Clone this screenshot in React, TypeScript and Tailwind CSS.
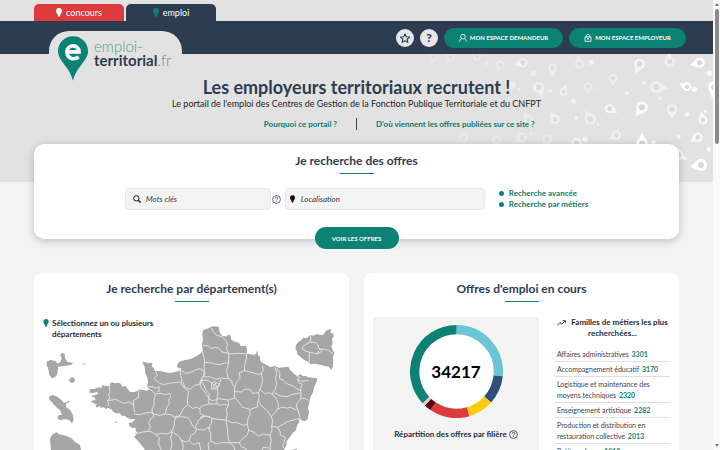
import React from "react";

const PIN_PATH = "M0 -12a12 12 0 0 1 12 12c0 6-7 11-12 23c-5-12-12-17-12-23a12 12 0 0 1 12-12z";

// x, y of the head, direction of the point (degrees clockwise from down), scale, opacity
const pins: [number, number, number, number, number][] = [
  [68, 38, 75, 1.2, 0.5], [157, 55, 0, 1.1, 0.4], [238, 42, 170, 1.2, 0.4], [418, 42, 25, 1.4, 0.7],
  [508, 35, 175, 1.3, 0.5], [598, 38, 75, 1.3, 1], [338, 85, 0, 1.1, 0.4], [115, 112, -20, 1.4, 0.5],
  [190, 125, 195, 1.0, 0.5], [263, 110, -5, 1.1, 0.4], [468, 112, -85, 1.5, 0.5], [560, 110, 110, 1.1, 1],
  [640, 112, 10, 1.4, 1], [328, 176, -60, 1.2, 0.7], [425, 172, 35, 1.5, 0.8], [515, 178, 0, 1.3, 0.6],
  [270, 208, 150, 1.4, 0.4], [165, 208, 140, 1.2, 0.5], [608, 210, 165, 1.1, 0.8], [85, 210, 150, 1.2, 0.25],
  [65, 262, 60, 1.2, 0.3], [348, 255, 60, 1.2, 0.5], [425, 280, 180, 1.4, 1], [592, 262, 60, 1.2, 0.8],
  [602, 345, 80, 1.5, 1], [535, 315, 160, 1.3, 0.7], [228, 280, 20, 1.4, 0.6], [140, 268, 30, 1.3, 0.25],
  [0, 45, 20, 1.1, 0.3], [-70, 18, 160, 1.1, 0.25], [-150, 20, 40, 1.1, 0.25], [-10, 270, 30, 1.1, 0.25],
  [-110, 262, 60, 1.1, 0.25], [-200, 20, 20, 1.1, 0.2],
];

const dots: [number, number, number, number][] = [
  [273, 37, 8, 0.5], [100, 70, 8, 0.4], [627, 70, 8, 0.8], [35, 105, 13, 0.4], [55, 118, 6, 0.3],
  [150, 122, 6, 0.4], [220, 152, 8, 0.5], [380, 130, 6, 0.5], [430, 100, 6, 0.5], [583, 118, 8, 0.8],
  [478, 145, 6, 0.5], [228, 203, 6, 0.5], [560, 193, 7, 0.7], [255, 268, 8, 0.7], [535, 260, 6, 0.6],
  [460, 277, 7, 0.7], [625, 298, 7, 0.8], [553, 325, 6, 0.7], [293, 222, 5, 0.4], [615, 185, 5, 0.7],
  [290, 115, 4, 0.3], [92, 250, 5, 0.3], [-40, 40, 7, 0.25],
];

const islands = [
  "M50 290L62 285L76 288L82 295L84 310L82 326L76 336L66 340L58 330L55 312L50 300Z",
  "M90 270L97 263L104 267L105 280L112 290L130 294L124 299L108 302L95 304L82 306L80 298L92 290L95 280Z",
  "M118 343L126 336L134 341L134 350L126 354L118 350Z",
  "M57 396L66 390L80 394L92 403L102 414L112 410L118 406L119 411L108 416L108 426L120 434L128 448L131 466L125 475L118 465L104 462L90 466L82 460L86 450L96 450L90 436L76 424L66 412L58 404Z",
  "M60 520L68 508L80 502L88 508L108 512L124 520L136 532L150 540L154 560L150 620L130 660L90 660L66 600Z",
  "M155 300L168 293L162 299Z",
  "M252 472L260 470L262 475Z",
  "M786 555L800 551L802 562L780 565Z",
];

const mainland =
  "M519 196L531 191L548 184L567 185L568 197L571 206L579 214L590 214L597 208L602 214L603 223L614 230L628 234L632 243L648 243L651 254L650 266L662 268L673 270L679 265L682 256L684 270L690 276L691 288L702 296L715 302L720 306L735 303L746 308L762 307L775 305L780 315L788 322L796 330L802 333L812 328L818 333L830 334L834 337L848 338L862 340L860 350L855 360L851 372L848 385L842 394L840 402L838 414L834 428L837 442L835 453L832 464L825 468L818 467L812 463L806 463L808 472L803 478L800 486L798 496L788 504L782 514L775 522L769 532L770 540L765 548L763 560L770 680L360 680L345 560L342 550L330 535L322 526L312 517L318 509L315 503L324 505L318 498L316 488L306 489L298 482L296 475L308 471L316 462L303 463L292 458L284 452L275 452L270 445L258 445L250 440L243 432L232 428L228 433L222 427L212 428L208 423L200 428L196 421L203 419L193 416L182 408L196 405L195 398L182 392L196 390L204 387L202 380L190 384L178 383L181 372L192 372L205 367L215 369L215 361L230 363L238 363L241 355L246 352L256 355L266 353L272 356L278 365L286 362L291 369L300 380L308 382L320 379L328 373L338 375L352 377L358 371L350 365L354 352L352 338L346 325L344 306L337 292L347 291L352 295L367 293L365 305L371 308L374 318L390 318L406 322L422 324L438 320L450 316L455 309L446 310L441 305L443 296L448 290L465 285L482 282L500 273L512 265L519 257L517 248L516 238L519 225L517 208Z";

// Department limits of the eastern half of the map
const bordersEast = [
  "M8 76L24 78L34 86L45 82L56 84L66 96L78 98L90 102L115 100L141 101",
  "M34 24L42 38L50 46L66 50L78 62L82 72L80 88L87 102",
  "M8 96L12 112L14 126L12 140L13 154L10 172",
  "M14 128L30 128L44 132L60 134L74 128L86 130",
  "M86 100L86 130L80 150L82 165L86 178L95 182L97 194L105 200L103 215",
  "M10 170L26 170L34 172L48 178L62 174L84 176",
  "M141 101L137 125L133 140L134 152L118 158L120 175L110 186L105 200",
  "M134 152L148 156L160 158L172 162L185 162",
  "M187 138L190 150L184 160L188 178L185 194L180 208L175 218L178 232L172 250L174 260L162 264L150 268",
  "M225 142L230 160L226 176L230 190L226 208L216 222L205 218L196 222L180 208",
  "M230 145L240 160L238 175L252 182L262 192L280 198L290 206L303 213",
  "M290 168L300 172L292 178L305 184L322 181L326 184M292 178L296 188L307 192L302 205L303 218L302 236L290 252L290 262L294 270L298 285L302 292",
  "M222 218L240 228L262 230L275 224L300 219M302 236L314 235L326 241",
  "M103 215L124 216L134 208L150 208L158 220L176 218",
  "M216 222L230 238L236 256L232 268L245 262L260 264L272 262L290 270",
  "M174 240L185 258L200 270L214 290L232 268",
  "M103 215L104 232L115 245L128 262L150 268L150 282L144 296L142 312L146 330",
  "M105 234L84 240L86 256L78 270L82 282L78 300L96 308L112 308L130 316L142 312M78 300L82 326L84 350L88 368L118 368L128 356L142 345L146 330L160 336L176 348L190 342L210 346L216 330L215 318L218 304L214 290",
  "M215 318L232 322L250 312L264 304L280 300L300 294",
  "M232 322L240 334L242 346L256 352L252 366L248 378L256 392",
  "M210 346L214 362L210 380L212 400M118 368L124 380L138 386L140 400M186 392L190 382L208 384",
  "M0 262L10 256L26 252L52 252L62 256L72 252L84 256M24 240L28 252M50 240L52 252M26 238L40 242L56 236L84 240",
  "M0 292L20 288L36 295L52 298L78 300M36 295L34 310L26 324L32 340L32 362L24 372L28 400M32 362L48 372L64 368L88 368M88 368L102 380L106 400",
  "M2 182L12 195L18 212L28 222L26 238M2 182L20 180L36 190M62 178L58 192L52 204L54 220L50 238M32 206L52 208M36 190L44 184L52 190L58 194L52 202L42 204L34 200L36 190L54 202M40 200L50 186",
];

// Department limits of the western half of the map
const bordersWest = [
  "M90 188L88 202L90 214L86 226L90 236L82 242L86 250L84 258",
  "M82 242L98 240L108 238L118 244L132 250L146 246L158 252L162 262L164 278",
  "M178 204L176 220L174 234L160 242L162 256M206 206L218 214L226 224L222 240L222 256L216 268L217 278L200 278L180 284L162 282",
  "M226 222L240 220L256 224L270 220L272 230L266 240L268 252L260 262L256 282L240 286L222 282L217 278",
  "M201 200L216 200L228 204L238 200L236 216",
  "M226 154L232 166L222 176L236 188L250 194L268 190L284 188L298 186L306 192",
  "M300 150L302 166L306 180L304 192L314 206L326 214L324 226L322 240L323 254L310 266L300 286L286 292L272 284L256 282",
  "M292 148L304 152L318 160L334 156L346 150L360 146L370 152M310 188L314 202L330 208L344 196L360 192L368 178",
  "M370 152L376 160L364 178L360 186L364 204L376 218L384 230L388 240M323 254L338 266L348 262L360 266L360 280L374 288L390 290",
  "M217 278L222 290L212 296L206 310L212 320L204 334L188 336L166 342",
  "M204 334L216 336L228 344L244 340L262 342L276 334L282 318L286 292M228 344L238 354L236 372L244 392",
  "M286 292L302 290L322 292L332 304L338 318L350 328L344 340L332 346L328 362L316 366L304 360L296 348L276 336",
  "M276 336L272 354L276 370L272 392M304 360L310 378L308 392M350 328L372 330L384 322L390 326M350 328L346 320L356 300L374 288M328 362L340 374L358 368L362 392",
];

const inset =
  "M840 210L850 212L860 207L872 210L880 209L886 200L892 194L903 192L901 203L910 206L911 214L906 222L908 234L904 244L908 256L914 264L909 276L910 290L909 304L903 315L897 305L885 303L872 300L856 296L840 297L832 289L822 284L812 276L802 268L800 258L796 250L798 240L806 230L814 226L820 218L832 219Z";
const insetBorders =
  "M840 210L843 222L838 232L820 243L816 252L828 259L844 263L862 266L874 260L876 254L866 250L864 240L856 232L838 232M866 254L884 252L898 258L910 268M838 262L838 296M862 266L866 258";

function Pin({ className }: { className: string }) {
  return (
    <svg viewBox="0 0 16 24" className={className} fill="currentColor" aria-hidden="true">
      <path d="M8 0a8 8 0 0 1 8 8c0 4-3 7-5 10H5C3 15 0 12 0 8a8 8 0 0 1 8-8zM5 18h6v3.500H9.500v2.500h-3v-2.500H5z" />
    </svg>
  );
}

function Help({ className }: { className: string }) {
  return (
    <svg viewBox="0 0 24 24" className={className} fill="none" stroke="currentColor" strokeWidth="2" aria-hidden="true">
      <circle cx="12" cy="12" r="10.500" />
      <path d="M8.500 9.500c0-5 7-4.500 7-.5c0 2.500-3.500 2.500-3.500 5.500M12 16.500v2.300" />
    </svg>
  );
}

function Title({ children }: { children: React.ReactNode }) {
  return (
    <h2 className="flex flex-col items-center text-[12px] leading-[16px] font-bold text-[#2d3c50]">
      {children}
      <span className="mt-[4px] h-px w-[34px] bg-[#0b8274]" />
    </h2>
  );
}

function Header() {
  return (
    <header>
      <div className="flex items-end gap-[2px] bg-[#e2e2e2] px-[34px] pt-[4px] text-[9px] leading-[17px] text-white">
        <a href="#concours" className="flex w-[90px] items-center justify-center gap-[4px] rounded-t-[5px] bg-[#dc3a3c]">
          <Pin className="h-[9px] w-[6px]" />
          concours
        </a>
        <a href="#emploi" className="flex w-[90px] items-center justify-center gap-[4px] rounded-t-[5px] bg-[#2d3c50]">
          <Pin className="h-[9px] w-[6px] text-[#0b8274]" />
          emploi
        </a>
      </div>
      <nav className="flex h-[33px] items-center bg-[#2d3c50] pr-[27px] pl-[49px]">
        <a href="#accueil" className="relative z-10 mt-[10px] flex h-[52px] w-[133px] items-start self-start rounded-t-[20px] bg-[#e2e2e2] pt-[5px] pl-[9px]">
          <svg viewBox="0 0 90 134" className="h-[45px] w-[30px] shrink-0" aria-hidden="true">
            <path d="M45 0a45 45 0 0 1 45 45c0 28-36 48-45 89C36 93 0 73 0 45A45 45 0 0 1 45 0z" fill="#0b8274" />
            <path d="M27 47h36c0-24-36-24-36 0c0 24 24 24 35 15" fill="none" stroke="#fff" strokeWidth="11" />
          </svg>
          <span className="mt-[3px] ml-[6px] text-[15px] leading-[14px] text-[#2d3c50]">
            <span className="block font-light text-[#4d9c91]">emploi-</span>
            <span className="font-bold">territorial</span>
            <span className="font-light text-[#7b8490]">.fr</span>
          </span>
        </a>
        <div className="ml-auto flex items-center gap-[6px]">
          <button aria-label="Favoris" className="flex size-[18px] items-center justify-center rounded-full bg-[#e6e6e8] text-[#2d3c50]">
            <svg viewBox="0 0 24 24" className="size-[10px]" fill="none" stroke="currentColor" strokeWidth="2.500" strokeLinejoin="round" aria-hidden="true">
              <path d="M12 2l3 7 8 .8-6 5.200 2 7.500-7-4-7 4 2-7.500-6-5.200L9 9z" />
            </svg>
          </button>
          <button aria-label="Aide" className="flex size-[18px] items-center justify-center rounded-full bg-[#e6e6e8] text-[12px] leading-[18px] font-black text-[#2d3c50]">
            ?
          </button>
          <button className="flex h-[20px] w-[119px] items-center justify-center gap-[3px] rounded-full bg-[#0b8274] text-[6px] font-bold text-white">
            <svg viewBox="0 0 24 24" className="size-[8px]" fill="none" stroke="currentColor" strokeWidth="2.500" aria-hidden="true">
              <circle cx="12" cy="8" r="7" />
              <path d="M8 14c-4 1-6 4-6 9M16 14c4 1 6 4 6 9" />
            </svg>
            MON ESPACE DEMANDEUR
          </button>
          <button className="flex h-[20px] w-[117px] items-center justify-center gap-[3px] rounded-full bg-[#0b8274] text-[6px] font-bold text-white">
            <svg viewBox="0 0 24 24" className="size-[8px]" fill="none" stroke="currentColor" strokeWidth="2.500" aria-hidden="true">
              <path d="M3 9h18v13H3zM7 9V6c0-6 10-6 10 0v3M12 14v4M9 14h6" />
            </svg>
            MON ESPACE EMPLOYEUR
          </button>
        </div>
      </nav>
    </header>
  );
}

function Hero() {
  return (
    <section className="relative overflow-hidden bg-[#e2e2e2] pt-[22px] pb-[52px] text-center">
      <svg viewBox="-262 12 900 384" className="absolute top-0 right-0 h-[128px] w-[300px]" fill="#fff" aria-hidden="true">
        {pins.map(([x, y, a, s, o], i) => (
          <g key={i} transform={`translate(${x} ${y}) rotate(${a}) scale(${s})`} opacity={o}>
            <path d={PIN_PATH} />
            <circle r="6" fill="#d8d8d8" />
          </g>
        ))}
        {dots.map(([x, y, r, o], i) => (
          <circle key={i} cx={x} cy={y} r={r} opacity={o} />
        ))}
      </svg>
      <div className="relative">
        <h1 className="text-[18px] leading-[22px] font-bold text-[#2d3c50]">Les employeurs territoriaux recrutent !</h1>
        <p className="text-[9px] leading-[12px] text-[#222]">
          Le portail de l'emploi des Centres de Gestion de la Fonction Publique Territoriale et du CNFPT
        </p>
        <div className="mt-[8px] flex items-center text-[8px] leading-[12px] font-bold text-[#0b7a6d]">
          <div className="flex-1 pr-[19px] text-right">
            <a href="#portail">Pourquoi ce portail ?</a>
          </div>
          <span className="h-[12px] w-px bg-[#444]" />
          <div className="flex-1 pl-[19px] text-left">
            <a href="#offres">D'où viennent les offres publiées sur ce site ?</a>
          </div>
        </div>
      </div>
    </section>
  );
}

function Search() {
  return (
    <form className="relative z-10 mx-[34px] -mt-[38px] flex flex-col rounded-[10px] bg-white pt-[9px] shadow-[0_2px_8px_rgba(0,0,0,0.22)]">
      <Title>Je recherche des offres</Title>
      <div className="mt-[14px] flex items-center justify-center text-[8px]">
        <label className="flex h-[22px] w-[146px] items-center gap-[5px] rounded-[4px] border border-[#e8e8e8] bg-[#f3f3f3] px-[7px]">
          <svg viewBox="0 0 24 24" className="size-[8px] shrink-0" fill="none" stroke="#111" strokeWidth="3" aria-hidden="true">
            <circle cx="10" cy="10" r="8" />
            <path d="M16 16l7 7" strokeWidth="4" />
          </svg>
          <input aria-label="Mots clés" placeholder="Mots clés" className="w-full min-w-0 bg-transparent italic outline-none placeholder:text-[#2d3c50]" />
        </label>
        <Help className="mx-[1px] size-[9px] text-[#2d3c50]" />
        <label className="ml-[3px] flex h-[22px] w-[200px] items-center gap-[6px] rounded-[4px] border border-[#e8e8e8] bg-[#f3f3f3] px-[4px]">
          <Pin className="h-[8px] w-[5px] shrink-0 text-[#111]" />
          <input aria-label="Localisation" placeholder="Localisation" className="w-full min-w-0 bg-transparent italic outline-none placeholder:text-[#2d3c50]" />
        </label>
        <ul className="ml-[14px] text-[8px] leading-[11px] font-bold whitespace-nowrap text-[#0b7a6d]">
          <li className="flex items-center gap-[5px]">
            <span className="size-[5px] shrink-0 rounded-full bg-[#0b8274]" />
            <a href="#avancee">Recherche avancée</a>
          </li>
          <li className="flex items-center gap-[5px]">
            <span className="size-[5px] shrink-0 rounded-full bg-[#0b8274]" />
            <a href="#metiers">Recherche par métiers</a>
          </li>
        </ul>
      </div>
      <button type="button" className="mt-[17px] -mb-[10px] h-[22px] w-[84px] self-center rounded-full bg-[#0b8274] text-[6px] font-bold text-white">
        VOIR LES OFFRES
      </button>
    </form>
  );
}

function Departments() {
  return (
    <section className="rounded-[8px] bg-white pt-[8px]">
      <Title>Je recherche par département(s)</Title>
      <div className="mt-[13px] grid">
        <svg viewBox="12 150 945 540" className="col-start-1 row-start-1 w-full" fill="#a6a6a6" strokeLinejoin="round" role="img" aria-label="Carte des départements">
          {islands.map((d) => (
            <path key={d} d={d} />
          ))}
          <path d={mainland} />
          <path d={inset} />
          <g fill="none" stroke="#ededed" strokeWidth="2.500">
            <g transform="translate(510 165)">
              {bordersEast.map((d) => (
                <path key={d} d={d} />
              ))}
            </g>
            <g transform="translate(150 165)">
              {bordersWest.map((d) => (
                <path key={d} d={d} />
              ))}
            </g>
            <path d={insetBorders} />
          </g>
        </svg>
        <p className="col-start-1 row-start-1 flex w-[130px] gap-[3px] pt-[3px] pl-[9px] text-[8px] leading-[11px] font-bold text-[#222b38]">
          <Pin className="mt-[1px] h-[8px] w-[6px] shrink-0 text-[#0b8274]" />
          Sélectionnez un ou plusieurs départements
        </p>
      </div>
    </section>
  );
}

const slices = [
  { from: 0, to: 96, color: "#6cc5d6" },
  { from: 96, to: 132, color: "#30507a" },
  { from: 132, to: 164, color: "#fdcb0a" },
  { from: 164, to: 214, color: "#dc3a3c" },
  { from: 214, to: 223, color: "#5a0510" },
  { from: 223, to: 227, color: "#f0c5ce" },
  { from: 227, to: 360, color: "#0b8274" },
];

function arc(from: number, to: number) {
  const p = (deg: number) => {
    const r = (deg * Math.PI) / 180;
    return `${50 + 45 * Math.sin(r)} ${50 - 45 * Math.cos(r)}`;
  };
  return `M${p(from)}A45 45 0 0 1 ${p(to)}`;
}

const families: [string, number][] = [
  ["Affaires administratives", 3301],
  ["Accompagnement éducatif", 3170],
  ["Logistique et maintenance des moyens techniques", 2320],
  ["Enseignement artistique", 2282],
  ["Production et distribution en restauration collective", 2013],
  ["Petite enfance", 1810],
];

function Offers() {
  return (
    <section className="rounded-[8px] bg-white pt-[8px]">
      <Title>Offres d'emploi en cours</Title>
      <div className="mt-[15px] flex gap-[16px] px-[9px]">
        <div className="flex w-[166px] shrink-0 flex-col items-center bg-[#f3f3f3] pt-[8px] pb-[30px]">
          <div className="grid place-items-center">
            <svg viewBox="0 0 100 100" className="col-start-1 row-start-1 size-[93px]" fill="none" strokeWidth="10" aria-hidden="true">
              <circle cx="50" cy="50" r="42" fill="#fff" />
              {slices.map((s) => (
                <path key={s.from} d={arc(s.from, s.to)} stroke={s.color} />
              ))}
            </svg>
            <strong className="col-start-1 row-start-1 text-[17px] leading-[20px] font-bold text-black">34217</strong>
          </div>
          <p className="mt-[11px] flex items-center gap-[2px] text-[8px] leading-[11px] font-bold text-[#222b38]">
            Répartition des offres par filière
            <Help className="size-[9px]" />
          </p>
        </div>
        <div className="min-w-0 flex-1">
          <h3 className="text-center text-[8px] leading-[11px] font-bold text-[#222b38]">
            <svg viewBox="0 0 24 16" className="mr-[5px] inline h-[6px] w-[9px]" fill="none" stroke="currentColor" strokeWidth="2.500" aria-hidden="true">
              <path d="M1 14l7-7 5 4 9-9M15 2h7v7" />
            </svg>
            Familles de métiers les plus recherchées...
          </h3>
          <ul className="mt-[8px] text-[7px] leading-[11px] text-[#3a424d]">
            {families.map(([name, count]) => (
              <li key={name} className="border-b border-[#dedede] px-[2px] pt-[2px] pb-px">
                {name} <span className="ml-[1px] font-bold text-[#0b8274]">{count}</span>
              </li>
            ))}
          </ul>
        </div>
      </div>
    </section>
  );
}

export default function App() {
  return (
    <div className="flex h-screen overflow-hidden bg-[#f3f3f3] font-[Lato,sans-serif]">
      <div className="min-w-0 flex-1 overflow-hidden">
        <Header />
        <Hero />
        <Search />
        <main className="mx-[34px] mt-[34px] grid grid-cols-2 gap-[15px]">
          <Departments />
          <Offers />
        </main>
      </div>
      <div className="flex w-[7px] flex-col items-center bg-[#fafafa] py-[3px]" aria-hidden="true">
        <span className="border-x-[2px] border-b-[3px] border-x-transparent border-b-[#777]" />
        <span className="mt-[3px] h-[135px] w-[4px] rounded-full bg-[#8b8b8b]" />
        <span className="mt-auto border-x-[2px] border-t-[3px] border-x-transparent border-t-[#777]" />
      </div>
    </div>
  );
}
